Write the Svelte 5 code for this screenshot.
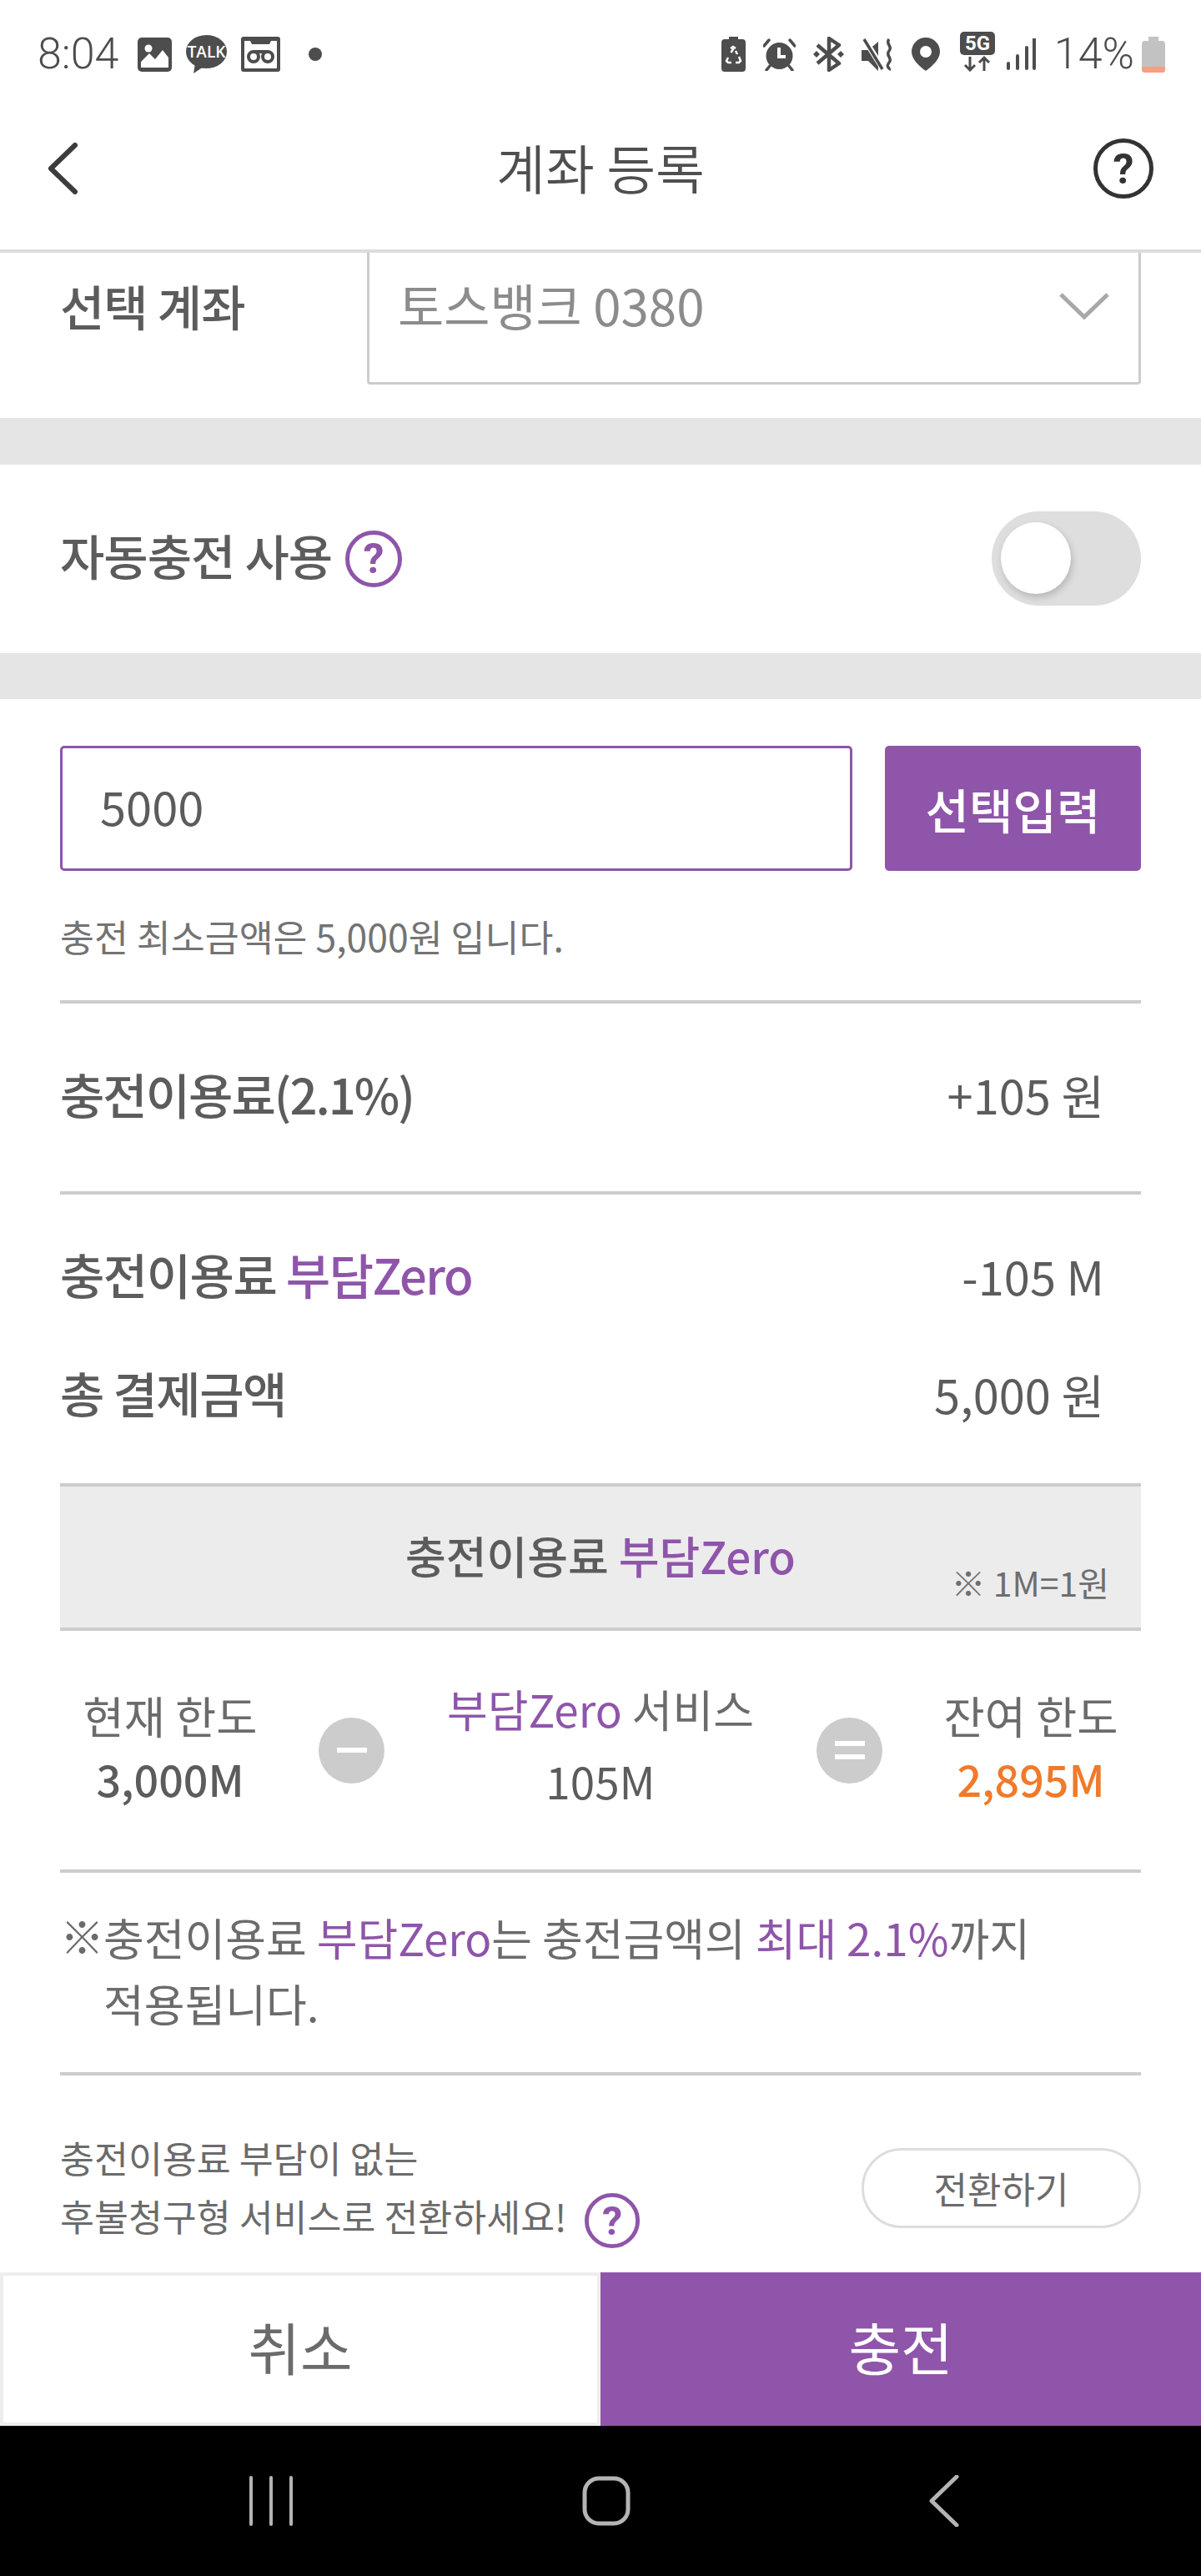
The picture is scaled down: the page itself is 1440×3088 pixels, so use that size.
<script>
  let autoCharge = false;
  const limits = [
    { key: 'now', value: '3,000M' },
    { key: 'left', value: '2,895M' }
  ];
</script>

<div class="phone">
  <div class="status">
    <div class="status-left">
      <span class="clock">8:04</span>
      <svg class="i-img" width="41" height="41" viewBox="0 0 41 41">
        <rect width="41" height="41" rx="5" fill="#4d4d4d" />
        <circle cx="13" cy="13" r="4.500" fill="#fff" />
        <path d="M4 36V29L14 19l7 7 9-11 7 9v12z" fill="#fff" />
      </svg>
      <svg class="i-talk" width="49" height="46" viewBox="0 0 49 46">
        <ellipse cx="24.500" cy="20" rx="24.500" ry="20" fill="#4d4d4d" />
        <path d="M11 34l-2 12 12-8z" fill="#4d4d4d" />
        <text x="24.500" y="27" text-anchor="middle" class="talk">TALK</text>
      </svg>
      <svg class="i-vm" width="47" height="42" viewBox="0 0 47 42">
        <path fill-rule="evenodd" d="M3 0h41a3 3 0 0 1 3 3v36a3 3 0 0 1-3 3H3a3 3 0 0 1-3-3V3a3 3 0 0 1 3-3zM4 5v33h39V5h-7l-2 4H13l-2-4z" fill="#4d4d4d" />
        <circle cx="15" cy="24" r="6" fill="none" stroke="#4d4d4d" stroke-width="4" />
        <circle cx="32" cy="24" r="6" fill="none" stroke="#4d4d4d" stroke-width="4" />
        <path d="M15 18h17" stroke="#4d4d4d" stroke-width="4" />
      </svg>
      <span class="dot"></span>
    </div>
    <div class="status-right">
      <svg width="29" height="42" viewBox="0 0 29 42">
        <path d="M9 0h11v3h5a4 4 0 0 1 4 4v31a4 4 0 0 1-4 4H4a4 4 0 0 1-4-4V7a4 4 0 0 1 4-4h5z" fill="#4d4d4d" />
        <path d="M14.500 14l-3 5M17 17l2 4M8 25l-2 4 2 2h4M21 24l2 5-2 2h-4M11 14l3-2 3 2" fill="none" stroke="#fff" stroke-width="2.500" />
      </svg>
      <svg width="39" height="39" viewBox="0 0 39 39">
        <circle cx="19.500" cy="21" r="16" fill="#4d4d4d" />
        <path d="M19 11v11h8" fill="none" stroke="#fff" stroke-width="4" />
        <path d="M1 9l6-7M38 9l-6-7M8 33l-4 5M31 33l4 5" stroke="#4d4d4d" stroke-width="3.500" stroke-linecap="round" />
      </svg>
      <svg width="37" height="42" viewBox="0 0 37 42">
        <path d="M5 10l26 22-12 8V2l12 8L5 32" fill="none" stroke="#4d4d4d" stroke-width="4.500" stroke-linejoin="round" />
        <path d="M0 21l4-4 4 4-4 4zM37 21l-4-4-4 4 4 4z" fill="#4d4d4d" />
      </svg>
      <svg width="39" height="39" viewBox="0 0 39 39">
        <path d="M0 14h8L20 4v35L8 27H0z" fill="#4d4d4d" />
        <path d="M4 2l22 35" stroke="#fff" stroke-width="7" />
        <path d="M3 1l22 36" stroke="#4d4d4d" stroke-width="3.500" />
        <path d="M33 1c-5 6 5 8 0 14s5 8 0 14 2 6 0 9" fill="none" stroke="#4d4d4d" stroke-width="3.500" />
      </svg>
      <svg width="34" height="40" viewBox="0 0 34 40">
        <path fill-rule="evenodd" d="M17 0a17 17 0 0 1 17 17c0 9-9 17-17 23C9 34 0 26 0 17A17 17 0 0 1 17 0zm0 10a7 7 0 1 0 0 14 7 7 0 0 0 0-14z" fill="#4d4d4d" />
      </svg>
      <svg class="i-5g" width="42" height="48" viewBox="0 0 42 48">
        <rect width="42" height="28" rx="5" fill="#4d4d4d" />
        <text x="21" y="22" text-anchor="middle" class="five">5G</text>
        <path d="M12 30v16M6 40l6 6 6-6M29 47V31M23 37l6-6 6 6" fill="none" stroke="#4d4d4d" stroke-width="3" />
      </svg>
      <svg class="i-sig" width="37" height="38" viewBox="0 0 37 38">
        <path d="M3 30v6M14 21v15M25 11v25M34 1v35" stroke="#4d4d4d" stroke-width="4" stroke-linecap="round" />
      </svg>
      <span class="clock pct">14%</span>
      <svg class="i-bat" width="28" height="43" viewBox="0 0 28 43">
        <path d="M8 0h12v5h4a4 4 0 0 1 4 4v30a4 4 0 0 1-4 4H4a4 4 0 0 1-4-4V9a4 4 0 0 1 4-4h4z" fill="#c2c2c2" />
        <path d="M0 36h28v3a4 4 0 0 1-4 4H4a4 4 0 0 1-4-4z" fill="#fb9d80" />
      </svg>
    </div>
  </div>

  <header class="top">
    <svg class="back" width="36" height="62" viewBox="0 0 36 62">
      <path d="M33 3L4 31l29 28" fill="none" stroke="#3c3c3c" stroke-width="6" stroke-linecap="round" stroke-linejoin="round" />
    </svg>
    <h1>계좌 등록</h1>
    <svg class="help-top" width="72" height="72" viewBox="0 0 72 72">
      <circle cx="36" cy="36" r="33.500" fill="none" stroke="#333" stroke-width="5" />
      <text x="36" y="54" text-anchor="middle" class="q">?</text>
    </svg>
  </header>

  <main class="scroll">
    <section class="account">
      <span class="label">선택 계좌</span>
      <div class="select">
        <span>토스뱅크 0380</span>
        <svg width="62" height="34" viewBox="0 0 62 34">
          <path d="M3 3l28 27L59 3" fill="none" stroke="#a8a8a8" stroke-width="5" />
        </svg>
      </div>
    </section>

    <section class="auto">
      <div class="auto-label">
        <span class="label">자동충전 사용</span>
        <svg class="help" width="68" height="68" viewBox="0 0 68 68">
          <circle cx="34" cy="34" r="31.500" fill="none" stroke="#8f55aa" stroke-width="5" />
          <text x="34" y="51" text-anchor="middle" class="q purple">?</text>
        </svg>
      </div>
      <div class="toggle" class:on={autoCharge}><span class="knob"></span></div>
    </section>

    <section class="amount">
      <div class="amount-row">
        <div class="amount-input">5000</div>
        <button class="pick">선택입력</button>
      </div>
      <p class="hint">충전 최소금액은 5,000원 입니다.</p>

      <div class="row fee">
        <span class="label">충전이용료(2.1%)</span>
        <span class="val">+105 원</span>
      </div>

      <div class="totals">
        <div class="row">
          <span class="label">충전이용료 <em>부담Zero</em></span>
          <span class="val">-105 M</span>
        </div>
        <div class="row">
          <span class="label">총 결제금액</span>
          <span class="val">5,000 원</span>
        </div>
      </div>

      <div class="zero-box">
        <span class="zero-title">충전이용료 <em>부담Zero</em></span>
        <span class="rate">※ 1M=1원</span>
      </div>

      <div class="calc">
        <div class="cell side">
          <span>현재 한도</span>
          <strong>{limits[0].value}</strong>
        </div>
        <div class="op"><span class="bar"></span></div>
        <div class="cell mid">
          <span><em>부담Zero</em> 서비스</span>
          <span class="plain">105M</span>
        </div>
        <div class="op"><span class="bar"></span><span class="bar"></span></div>
        <div class="cell side">
          <span>잔여 한도</span>
          <strong class="orange">{limits[1].value}</strong>
        </div>
      </div>

      <div class="note">
        <span class="mark">※</span>
        <p>충전이용료 <em>부담Zero</em>는 충전금액의 <em>최대 2.1%</em>까지<br />적용됩니다.</p>
      </div>

      <div class="convert">
        <p>충전이용료 부담이 없는<br />후불청구형 서비스로 전환하세요!
          <svg class="help small" width="66" height="66" viewBox="0 0 68 68">
            <circle cx="34" cy="34" r="31.500" fill="none" stroke="#8f55aa" stroke-width="5" />
            <text x="34" y="51" text-anchor="middle" class="q purple">?</text>
          </svg>
        </p>
        <button class="switch">전환하기</button>
      </div>
    </section>
  </main>

  <div class="actions">
    <button class="cancel"><span>취소</span></button>
    <button class="charge"><span>충전</span></button>
  </div>

  <nav class="softkeys">
    <svg width="54" height="60" viewBox="0 0 54 60">
      <path d="M3 2v56M27 2v56M51 2v56" stroke="#b4b4b4" stroke-width="4" stroke-linecap="round" />
    </svg>
    <svg class="home" width="58" height="60" viewBox="0 0 58 60">
      <rect x="3" y="3" width="52" height="54" rx="17" fill="none" stroke="#b4b4b4" stroke-width="5" />
    </svg>
    <svg class="prev" width="36" height="62" viewBox="0 0 36 62">
      <path d="M33 2L3 31l30 29" fill="none" stroke="#b4b4b4" stroke-width="5" stroke-linecap="round" stroke-linejoin="round" />
    </svg>
  </nav>
</div>

<style>
  :global(body) {
    margin: 0;
    background: #fff;
  }

  .phone {
    width: 1440px;
    height: 3088px;
    display: flex;
    flex-direction: column;
    overflow: hidden;
    font-family: "Noto Sans CJK KR", "Noto Sans", sans-serif;
    color: #5c5c5c;
    background: #fff;
  }

  em {
    font-style: normal;
    color: #8f55aa;
  }

  button {
    font-family: inherit;
    border: none;
    padding: 0;
  }

  p {
    margin: 0;
  }

  .status {
    height: 104px;
    flex: none;
    display: flex;
    justify-content: space-between;
    align-items: center;
    padding: 26px 43px 0 45px;
    box-sizing: border-box;
  }

  .status-left,
  .status-right {
    display: flex;
    align-items: center;
    gap: 21px;
  }

  .clock {
    font-family: Roboto, sans-serif;
    font-weight: 300;
    font-size: 52px;
    line-height: 60px;
    color: #4d4d4d;
  }

  .pct {
    margin-right: -12px;
  }

  .dot {
    width: 16px;
    height: 16px;
    margin-left: 13px;
    border-radius: 50%;
    background: #4d4d4d;
  }

  .i-img {
    margin-left: 2px;
  }

  .i-talk,
  .i-vm {
    margin-left: -4px;
  }

  .i-5g {
    margin-top: -6px;
    margin-left: 3px;
    margin-right: -8px;
  }

  .talk {
    font-family: "Open Sans", sans-serif;
    font-weight: 600;
    font-size: 19px;
    fill: #fff;
  }

  .five {
    font-family: Roboto, sans-serif;
    font-weight: 700;
    font-size: 24px;
    fill: #fff;
  }

  .top {
    height: 195px;
    flex: none;
    display: grid;
    grid-template-columns: 1fr auto 1fr;
    align-items: center;
    padding: 0 57px;
    border-bottom: 4px solid #dcdcdc;
  }

  .help-top {
    justify-self: end;
  }

  h1 {
    margin: 0;
    padding-bottom: 6px;
    font-weight: 350;
    font-size: 64px;
    color: #4f4f4f;
  }

  .q {
    font-family: Roboto, sans-serif;
    font-weight: 700;
    font-size: 50px;
    fill: #333;
  }

  .q.purple {
    fill: #8f55aa;
  }

  .scroll {
    flex: 1;
    min-height: 0;
    overflow: hidden;
    background: #fff;
  }

  .label {
    display: block;
    padding-bottom: 10px;
    font-weight: 500;
    font-size: 58px;
    letter-spacing: -1px;
    color: #5c5c5c;
  }

  .account {
    margin-top: -30px;
    padding: 0 72px 40px;
    display: flex;
    align-items: center;
    justify-content: space-between;
    border-bottom: 56px solid #e5e5e5;
  }

  .account .label {
    padding-bottom: 2px;
  }

  .select {
    width: 928px;
    height: 188px;
    box-sizing: border-box;
    border: 3px solid #ccc;
    border-radius: 4px;
    display: flex;
    align-items: center;
    justify-content: space-between;
    padding: 0 34px;
    font-size: 60px;
    color: #8c8c8c;
  }

  .select span {
    padding-bottom: 6px;
  }

  .auto {
    height: 226px;
    padding: 0 72px;
    display: flex;
    align-items: center;
    justify-content: space-between;
    border-bottom: 55px solid #e5e5e5;
  }

  .auto-label {
    display: flex;
    align-items: center;
    gap: 16px;
  }

  .toggle {
    position: relative;
    width: 179px;
    height: 113px;
    margin-bottom: 2px;
    border-radius: 57px;
    background: #dedede;
  }

  .knob {
    position: absolute;
    left: 11px;
    top: 13px;
    width: 84px;
    height: 86px;
    border-radius: 50%;
    background: #fff;
    box-shadow: 2px 4px 8px rgba(0, 0, 0, 0.18);
  }

  .amount {
    padding: 56px 72px 0;
  }

  .amount-row {
    display: flex;
    justify-content: space-between;
    height: 150px;
  }

  .amount-input {
    width: 950px;
    box-sizing: border-box;
    border: 3.500px solid #8f55aa;
    border-radius: 5px;
    display: flex;
    align-items: center;
    padding: 0 0 8px 45px;
    font-size: 56px;
    color: #5c5c5c;
  }

  .pick {
    width: 307px;
    border-radius: 5px;
    background: #8f55aa;
    color: #fff;
    font-weight: 500;
    font-size: 57px;
  }

  .hint {
    height: 155px;
    line-height: 156px;
    font-size: 44.500px;
    color: #737373;
    border-bottom: 4px solid #ccc;
  }

  .row {
    display: flex;
    align-items: center;
    justify-content: space-between;
    padding-right: 44px;
  }

  .val {
    padding-bottom: 8px;
    font-size: 56px;
    color: #5c5c5c;
  }

  .fee {
    height: 225px;
    border-bottom: 4px solid #ccc;
  }

  .fee .label {
    letter-spacing: -2px;
  }

  .totals {
    height: 346px;
    padding-top: 65px;
    box-sizing: border-box;
    display: flex;
    flex-direction: column;
    gap: 72px;
  }

  .totals .row {
    height: 70px;
  }

  .totals .label {
    letter-spacing: -1.500px;
  }

  .zero-box {
    position: relative;
    height: 169px;
    border-top: 4px solid #ccc;
    border-bottom: 4px solid #ccc;
    background: #ececec;
    display: flex;
    align-items: center;
    justify-content: center;
  }

  .zero-title {
    padding-bottom: 6px;
    font-weight: 500;
    font-size: 53px;
    color: #5c5c5c;
  }

  .rate {
    position: absolute;
    right: 38px;
    bottom: 25px;
    font-size: 41px;
    color: #6e6e6e;
  }

  .calc {
    height: 286px;
    display: grid;
    grid-template-columns: 264px 171px 1fr 171px 264px;
    align-items: center;
    justify-items: center;
    border-bottom: 4px solid #ccc;
  }

  .cell {
    display: flex;
    flex-direction: column;
    align-items: center;
    color: #6b6b6b;
  }

  .cell span {
    line-height: 76px;
  }

  .side {
    font-size: 53.500px;
    padding-bottom: 8px;
  }

  .mid {
    font-size: 53px;
    gap: 10px;
    padding-bottom: 14px;
  }

  .cell strong {
    font-weight: 500;
    font-size: 52px;
    line-height: 76px;
    color: #5c5c5c;
  }

  .cell strong.orange {
    color: #f07a2a;
  }

  .plain {
    color: #5c5c5c;
  }

  .op {
    width: 79px;
    height: 79px;
    border-radius: 50%;
    background: #ccc;
    display: flex;
    flex-direction: column;
    align-items: center;
    justify-content: center;
    gap: 10px;
  }

  .bar {
    width: 36px;
    height: 6px;
    background: #fff;
  }

  .note {
    height: 239px;
    box-sizing: content-box;
    display: flex;
    align-items: center;
    font-size: 53px;
    color: #6b6b6b;
    border-bottom: 4px solid #ccc;
  }

  .note .mark {
    align-self: flex-start;
    line-height: 79px;
    margin-top: 36px;
    width: 52px;
  }

  .note p {
    padding-bottom: 6px;
    line-height: 79px;
  }

  .convert {
    height: 236px;
    box-sizing: border-box;
    padding-top: 34px;
    display: flex;
    align-items: center;
    justify-content: space-between;
  }

  .convert p {
    font-size: 44.500px;
    line-height: 70px;
    color: #6b6b6b;
  }

  .small {
    vertical-align: middle;
    margin-left: 12px;
  }

  .switch {
    width: 335px;
    height: 96px;
    border: 3px solid #ddd;
    border-radius: 48px;
    background: #fff;
    font-size: 44px;
    color: #6b6b6b;
  }

  .actions {
    flex: none;
    height: 184px;
    display: flex;
  }

  .actions button {
    width: 720px;
    font-size: 68px;
  }

  .actions span {
    display: block;
    padding-bottom: 8px;
  }

  .cancel {
    background: #fff;
    color: #6b6b6b;
    border: 4px solid #eee;
  }

  .charge {
    background: #8f55aa;
    color: #fff;
  }

  .softkeys {
    flex: none;
    height: 180px;
    background: #000;
    display: flex;
    align-items: center;
    padding-left: 298px;
  }

  .home {
    margin-left: 346px;
  }

  .prev {
    margin-left: 358px;
  }
</style>
